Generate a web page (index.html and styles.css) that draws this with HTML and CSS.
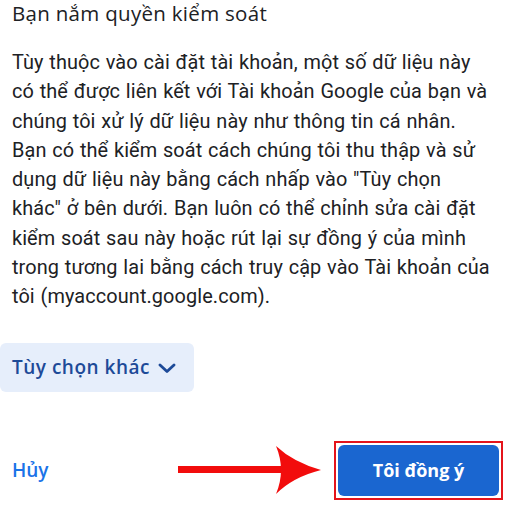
FILE: index.html
```html
<!DOCTYPE html>
<html lang="vi">
<head>
<meta charset="utf-8">
<link rel="stylesheet" href="styles.css">
</head>
<body>
<div class="page">
  <h1 class="title">Bạn nắm quyền kiểm soát</h1>
  <p class="text">Tùy thuộc vào cài đặt tài khoản, một số dữ liệu này<br>có thể được liên kết với Tài khoản Google của bạn và<br>chúng tôi xử lý dữ liệu này như thông tin cá nhân.<br>Bạn có thể kiểm soát cách chúng tôi thu thập và sử<br>dụng dữ liệu này bằng cách nhấp vào "Tùy chọn<br>khác" ở bên dưới. Bạn luôn có thể chỉnh sửa cài đặt<br>kiểm soát sau này hoặc rút lại sự đồng ý của mình<br>trong tương lai bằng cách truy cập vào Tài khoản của<br>tôi (myaccount.google.com).</p>
  <button class="more">Tùy chọn khác
    <svg class="chev" viewBox="0 0 18 10" width="18" height="10"><path d="M2 2l7 6.5 7-6.5" fill="none" stroke="currentColor" stroke-width="2.8" stroke-linecap="round" stroke-linejoin="round"/></svg>
  </button>
  <div class="actions">
    <a class="cancel">Hủy</a>
    <svg class="arrow" viewBox="0 0 145 52" width="145" height="52">
      <rect x="0" y="22" width="108" height="7" fill="#f20c0c"/>
      <path d="M98 2 Q115 18 143 26 Q115 33 98 50 Q108 26 98 2 Z" fill="#f20c0c"/>
    </svg>
    <div class="highlight">
      <button class="agree">Tôi đồng ý</button>
    </div>
  </div>
</div>
</body>
</html>
```
FILE: styles.css
```css
* { box-sizing: border-box; }
html, body { margin: 0; padding: 0; background: #fff; }
body { font-family: Roboto, "Noto Sans", Arial, sans-serif; color: #202124; }
.page { width: 520px; height: 505px; padding: 0 0 0 12px; overflow: hidden; }
.title { margin: 0; font-family: "Open Sans", Roboto, sans-serif; font-size: 20.5px; font-weight: 400; line-height: 26px; letter-spacing: 0.3px; }
.text { margin: 22px 0 0; white-space: nowrap; font-size: 19.9px; line-height: 29.3px; letter-spacing: 0.1px; word-spacing: 0.7px; }
.more {
  display: flex; align-items: center; gap: 8px;
  margin: 31px 0 0 -12px; padding: 0 16px 0 12px; height: 49px; width: 194px;
  border: 0; border-radius: 6px; background: #e6eefb; color: #1d4a98;
  font-family: "Open Sans", Roboto, sans-serif; font-size: 19px; font-weight: 600; letter-spacing: 0.5px;
}
.chev { margin-top: 2px; }
.actions { display: flex; align-items: center; margin-top: 49px; padding-right: 17px; }
.cancel { color: #1a73e8; font-family: "Open Sans", Roboto, sans-serif; font-size: 19px; font-weight: 600; }
.arrow { margin-left: auto; margin-right: 11px; display: block; }
.highlight { border: 2px solid #e4141b; padding: 2px; width: 169px; height: 59px; }
.agree {
  display: block; width: 100%; height: 100%; border: 0; border-radius: 6px;
  background: #1a66d0; color: #fff; font-family: "Open Sans", Roboto, sans-serif; font-size: 18px; font-weight: 700;
}
```
